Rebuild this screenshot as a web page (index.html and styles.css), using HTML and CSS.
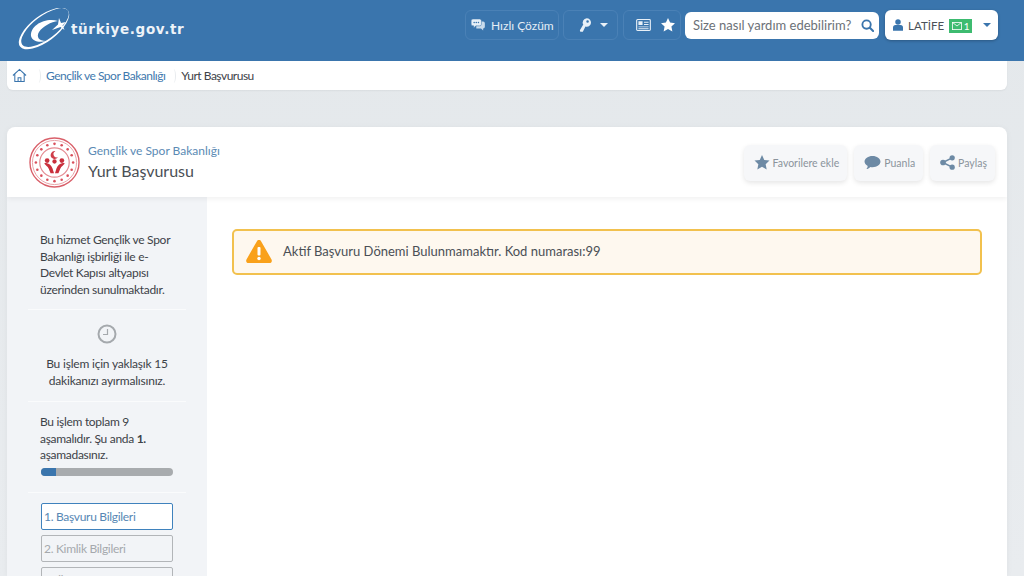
FILE: index.html
```html
<!DOCTYPE html>
<html lang="tr">
<head>
<meta charset="utf-8">
<title>Yurt Başvurusu</title>
<link rel="stylesheet" href="styles.css">
</head>
<body>
<header class="topbar">
  <a class="logo">
    <svg class="logo-mark" viewBox="0 0 53 42" width="53" height="42">
      <ellipse cx="26" cy="20.500" rx="30" ry="13" transform="rotate(-37 26 20.500)" fill="#fff"/>
      <ellipse cx="27" cy="19.500" rx="28.500" ry="11.500" transform="rotate(-37 27 19.500)" fill="#3a75ad"/>
      <path d="M40 13C28 9 12 17 13 28C14 33 21 35 28 33C21 33 18 29 21 24C25 18 33 14 40 13Z" fill="#fff"/>
      <path d="M41 10L43 15L48 14L44.500 17.500L46.500 22L42.500 19L34 22L40 16.500Z" fill="#fff"/>
    </svg>
    <span class="logo-text">türkiye.gov.tr</span>
  </a>
  <nav class="tools">
    <a class="tool tool-solve">
      <svg viewBox="0 0 16 14" width="14" height="12"><path d="M6 3h8a2 2 0 0 1 2 2v4a2 2 0 0 1-2 2v2.500L11.500 11H6Z" fill="#c9dbeb"/><path d="M2 0h8a2 2 0 0 1 2 2v4a2 2 0 0 1-2 2H5.500L3 10.500V8H2a2 2 0 0 1-2-2V2a2 2 0 0 1 2-2Z" fill="#e8f0f7" stroke="#3a75ad" stroke-width=".6"/><g fill="#3a75ad"><circle cx="3.500" cy="4" r=".9"/><circle cx="6" cy="4" r=".9"/><circle cx="8.500" cy="4" r=".9"/></g></svg>
      <span>Hızlı Çözüm</span>
    </a>
    <a class="tool tool-key">
      <svg viewBox="0 0 14 16" width="12" height="14"><path d="M9 0a5 5 0 0 1 0 10 5 5 0 0 1-1.500-.2L4.500 16H1.500l-.5-2L5 7.500A5 5 0 0 1 9 0Zm1 2.500a1.500 1.500 0 1 0 0 3 1.500 1.500 0 0 0 0-3Z" fill="#e8f0f7" fill-rule="evenodd"/></svg>
      <i class="caret caret-light"></i>
    </a>
    <a class="tool tool-id">
      <svg viewBox="0 0 16 13" width="15" height="12"><rect x=".6" y=".6" width="14.800" height="11.800" rx="1" fill="none" stroke="#e8f0f7" stroke-width="1.200"/><path d="M2.500 2.500h4.500v4H2.500ZM8.500 3h5v1h-5ZM8.500 5.500h5v1h-5ZM2.500 8h11v1h-11ZM2.500 10h11v1h-11Z" fill="#e8f0f7"/></svg>
      <svg viewBox="0 0 16 16" width="14" height="14"><path d="M8 0l2.400 5.200 5.600.7-4.100 3.900 1.100 5.600L8 12.600 3 15.400l1.100-5.600L0 5.900l5.600-.7Z" fill="#fff"/></svg>
    </a>
    <form class="search">
      <span class="search-text">Size nasıl yardım edebilirim?</span>
      <svg viewBox="0 0 14 14" width="13" height="13"><circle cx="6" cy="6" r="4.500" fill="none" stroke="#3a75ad" stroke-width="2"/><path d="M9.500 9.500L13 13" stroke="#3a75ad" stroke-width="2.200" stroke-linecap="round"/></svg>
    </form>
    <a class="user">
      <svg viewBox="0 0 12 14" width="10" height="12"><circle cx="6" cy="3.500" r="3.300" fill="#3a75ad"/><path d="M0 14V10a3 3 0 0 1 3-3h6a3 3 0 0 1 3 3v4Z" fill="#3a75ad"/></svg>
      <span class="user-name">LATİFE</span>
      <span class="badge">
        <svg viewBox="0 0 12 10" width="10" height="8"><rect x=".5" y=".5" width="11" height="9" fill="none" stroke="#fff"/><path d="M1 1l5 4 5-4" fill="none" stroke="#fff"/></svg>
        1
      </span>
      <i class="caret caret-blue"></i>
    </a>
  </nav>
</header>

<div class="crumbs">
  <svg class="home" viewBox="0 0 16 16" width="15" height="15"><path d="M1 8l7-6.500L15 8M3 6.500V14.500H13V6.500M6.500 14.500V10.500H9.500V14.500" fill="none" stroke="#3a75ad" stroke-width="1.100"/></svg>
  <i class="sep"></i>
  <a class="crumb-link">Gençlik ve Spor Bakanlığı</a>
  <i class="sep"></i>
  <span class="crumb-current">Yurt Başvurusu</span>
</div>

<main class="card">
  <section class="card-head">
    <svg class="emblem" viewBox="0 0 52 52" width="51" height="51">
      <circle cx="26" cy="26" r="25" fill="#fff" stroke="#d9606a" stroke-width="1.400"/>
      <circle cx="26" cy="26" r="22.500" fill="none" stroke="#e9a3a8" stroke-width="1"/>
      <circle cx="26" cy="26" r="15" fill="none" stroke="#e48b92" stroke-width="1.200"/>
      <g fill="#d9505c">
        <circle cx="26" cy="7" r="1.300"/><circle cx="33.300" cy="8.500" r="1.300"/><circle cx="39.400" cy="12.600" r="1.300"/><circle cx="43.500" cy="18.700" r="1.300"/><circle cx="45" cy="26" r="1.300"/><circle cx="43.500" cy="33.300" r="1.300"/><circle cx="39.400" cy="39.400" r="1.300"/><circle cx="33.300" cy="43.500" r="1.300"/><circle cx="26" cy="45" r="1.300"/><circle cx="18.700" cy="43.500" r="1.300"/><circle cx="12.600" cy="39.400" r="1.300"/><circle cx="8.500" cy="33.300" r="1.300"/><circle cx="7" cy="26" r="1.300"/><circle cx="8.500" cy="18.700" r="1.300"/><circle cx="12.600" cy="12.600" r="1.300"/><circle cx="18.700" cy="8.500" r="1.300"/>
      </g>
      <path d="M27 14.500a4 4 0 1 0 2.500 6 3.200 3.200 0 1 1-2.500-6Z" fill="#cf3d49"/>
      <g fill="#c92f3c">
        <circle cx="18.500" cy="24" r="2.400"/><circle cx="33.500" cy="24" r="2.400"/><circle cx="26" cy="25" r="2.200"/>
        <path d="M15.500 27c3-1.500 7 1 8.500 5l1.500 5h-3.500l-2-5c-1-2-3-3-4.500-5Z"/>
        <path d="M36.500 27c-3-1.500-7 1-8.500 5l-1.500 5h3.500l2-5c1-2 3-3 4.500-5Z"/>
      </g>
    </svg>
    <div class="title-block">
      <a class="agency">Gençlik ve Spor Bakanlığı</a>
      <h1 class="title">Yurt Başvurusu</h1>
    </div>
    <div class="actions">
      <a class="action action-fav">
        <svg viewBox="0 0 16 16" width="16" height="15"><path d="M8 0l2.400 5.200 5.600.7-4.100 3.900 1.100 5.600L8 12.600 3 15.400l1.100-5.600L0 5.900l5.600-.7Z" fill="#6d8aa5"/></svg>
        <span>Favorilere ekle</span>
      </a>
      <a class="action">
        <svg viewBox="0 0 18 16" width="17" height="15"><path d="M9 1c4.700 0 8.500 2.700 8.500 6S13.700 13 9 13c-.8 0-1.500-.1-2.200-.2C5.500 14 3.800 15 2.500 15c.8-1 1.300-2 1.400-3.300C1.800 10.600.500 9 .500 7 .500 3.700 4.300 1 9 1Z" fill="#6d8aa5"/></svg>
        <span>Puanla</span>
      </a>
      <a class="action">
        <svg viewBox="0 0 16 16" width="15" height="15"><g fill="#6d8aa5"><circle cx="3.200" cy="8" r="3"/><circle cx="13" cy="3" r="2.800"/><circle cx="13" cy="13" r="2.800"/></g><path d="M3 8L13 3M3 8l10 5" stroke="#6d8aa5" stroke-width="1.600"/></svg>
        <span>Paylaş</span>
      </a>
    </div>
  </section>

  <div class="card-body">
    <aside class="sidebar">
      <p class="note">Bu hizmet Gençlik ve Spor Bakanlığı işbirliği ile e-Devlet Kapısı altyapısı üzerinden sunulmaktadır.</p>
      <hr class="rule">
      <svg class="clock" viewBox="0 0 20 20" width="20" height="20"><circle cx="10" cy="10" r="8.500" fill="none" stroke="#a5a9ad" stroke-width="2"/><path d="M10.500 5v5.500H6" fill="none" stroke="#a5a9ad" stroke-width="1.200"/></svg>
      <p class="note note-center">Bu işlem için yaklaşık 15 dakikanızı ayırmalısınız.</p>
      <hr class="rule rule-tight">
      <p class="note">Bu işlem toplam 9 aşamalıdır. Şu anda <b class="num">1.</b> aşamadasınız.</p>
      <div class="progress"><div class="progress-fill"></div></div>
      <hr class="rule rule-steps">
      <ol class="steps">
        <li class="step step-active">1. Başvuru Bilgileri</li>
        <li class="step">2. Kimlik Bilgileri</li>
        <li class="step">3. Öğrenim Bilgileri</li>
      </ol>
    </aside>
    <section class="content">
      <div class="alert">
        <svg viewBox="0 0 26 23" width="26" height="23"><path d="M13 0c1 0 1.700.5 2.200 1.400l10.300 18c.9 1.600-.1 3.600-2 3.600H2.500c-1.900 0-2.900-2-2-3.600l10.300-18C11.300.5 12 0 13 0Z" fill="#f9a11b"/><rect x="11.500" y="7" width="3" height="8.500" rx="1" fill="#fff"/><circle cx="13" cy="18.500" r="1.700" fill="#fff"/></svg>
        <span>Aktif Başvuru Dönemi Bulunmamaktır. Kod numarası:99</span>
      </div>
    </section>
  </div>
</main>
</body>
</html>
```
FILE: styles.css
```css
* { box-sizing: border-box; }
html, body { height: 576px; overflow: hidden; }
body {
  margin: 0;
  background: linear-gradient(#e4e8eb, #e9ecef);
  font-family: Lato, "Open Sans", sans-serif;
  color: #3d4248;
}
a { color: inherit; text-decoration: none; }

.topbar {
  height: 61px;
  background: #3a75ad;
  display: flex;
  align-items: center;
  justify-content: space-between;
  padding: 0 26px 11px 18px;
}
.logo { display: flex; align-items: center; padding-top: 8px; }
.logo-mark { display: block; }
.logo-text {
  font: bold 13.500px "DejaVu Sans", sans-serif;
  color: #eef3f8;
  letter-spacing: .65px;
  margin-bottom: 1px;
}
.tools { display: flex; align-items: center; gap: 4px; }
.tool {
  height: 30px;
  border: 1px solid #4a81b6;
  border-radius: 6px;
  display: flex;
  align-items: center;
  color: #e4edf5;
  font-size: 12px;
}
.tool-solve { width: 94px; gap: 6px; padding-left: 5px; }
.tool-key { width: 55px; gap: 9px; padding-left: 15px; }
.tool-id { width: 58px; gap: 10px; padding-left: 12px; margin-left: 1px; }
.caret { width: 0; height: 0; border-left: 4px solid transparent; border-right: 4px solid transparent; }
.caret-light { border-top: 4px solid #e8f0f7; }
.caret-blue { border-top: 4px solid #3a75ad; margin-left: 6px; }
.search {
  width: 194px;
  height: 27px;
  margin: 0;
  background: #fff;
  border-radius: 6px;
  display: flex;
  align-items: center;
  justify-content: space-between;
  padding: 0 5px 0 8px;
}
.search-text { color: #6c7177; font-size: 13px; }
.user {
  width: 113px;
  height: 30px;
  margin-left: 2px;
  background: #fff;
  border-radius: 6px;
  box-shadow: 0 1px 3px rgba(0,0,0,.25);
  display: flex;
  align-items: center;
  gap: 5px;
  padding-left: 8px;
}
.user-name { color: #4b5158; font-size: 11.500px; }
.badge {
  width: 23px;
  height: 14px;
  background: #3dbb70;
  color: #fff;
  font-size: 10px;
  display: flex;
  align-items: center;
  justify-content: center;
  gap: 2px;
  margin-top: 2px;
}

.crumbs {
  width: 1000px;
  height: 29px;
  margin-left: 7px;
  background: #fff;
  border-radius: 0 0 6px 6px;
  display: flex;
  align-items: center;
  padding-left: 5px;
  font-size: 12px;
  letter-spacing: -.5px;
  box-shadow: 0 1px 2px rgba(0,0,0,.05);
}
.home { margin-right: 3px; }
.sep { width: 5px; height: 14px; margin: 0 5px 0 6px; border-right: 1px solid #e8ebee; border-radius: 0 50% 50% 0; }
.crumb-link { color: #3f79ae; }
.crumb-current { color: #3d4248; }

.card {
  width: 1000px;
  height: 449px;
  margin: 37px 0 0 7px;
  background: #fff;
  border-radius: 8px 8px 0 0;
  box-shadow: 0 1px 6px rgba(0,0,0,.05);
  overflow: hidden;
}
.card-head {
  height: 70px;
  display: flex;
  align-items: center;
  padding: 0 12px 0 22px;
  box-shadow: 0 2px 5px rgba(0,0,0,.06);
  position: relative;
}
.emblem { display: block; margin-top: 1px; }
.title-block { margin-left: 8px; }
.agency { display: block; color: #5b8ab4; font-size: 12px; line-height: 16px; }
.title { margin: 2px 0 1px; font-size: 16px; line-height: 20px; font-weight: 400; color: #4a4f55; }
.actions { margin-left: auto; display: flex; gap: 7px; padding-top: 1px; }
.action {
  height: 36px;
  background: #f6f7f9;
  border-radius: 6px;
  box-shadow: 0 2px 5px rgba(0,0,0,.1);
  display: flex;
  align-items: center;
  gap: 3px;
  padding: 0 8px 0 10px;
  color: #8b949c;
  font-size: 10.500px;
}
.card-body { display: flex; height: 379px; }
.sidebar {
  width: 200px;
  flex: none;
  background: #f2f4f7;
  padding: 35px 33px 0;
  overflow: hidden;
}
.note { margin: 0; font-size: 12px; line-height: 16.500px; color: #3d4248; letter-spacing: -.3px; }
.note-center { text-align: center; margin: 12px -6px 0; letter-spacing: -.2px; }
.num { font-weight: 700; }
.rule { border: 0; border-top: 1px solid #fafbfc; margin: 11px -12px 14px; }
.rule-tight { margin-top: 12px; margin-bottom: 12px; }
.rule-steps { margin: 16px -12px 10px; }
.clock { display: block; margin: 0 auto; }
.progress { height: 8px; background: #a8abae; border-radius: 4px; margin: 4px 1px 0; overflow: hidden; }
.progress-fill { width: 11%; height: 100%; background: #3a75ad; }
.steps { list-style: none; margin: 0; padding: 0; display: flex; flex-direction: column; gap: 5px; }
.step {
  height: 27px;
  margin: 0 1px;
  border: 1px solid #b2b5b8;
  border-radius: 2px;
  padding-left: 2px;
  font-size: 12px;
  letter-spacing: -.3px;
  line-height: 25px;
  color: #a5a9ad;
}
.step-active { background: #fff; border-color: #3f82bd; color: #5787b4; }
.content { flex: 1; padding: 32px 25px 0; }
.alert {
  height: 46px;
  background: #fef8ef;
  border: 2px solid #f2c14e;
  border-radius: 5px;
  display: flex;
  align-items: center;
  gap: 11px;
  padding: 0 0 2px 12px;
  font-size: 13px;
  color: #4a4f55;
}
```
